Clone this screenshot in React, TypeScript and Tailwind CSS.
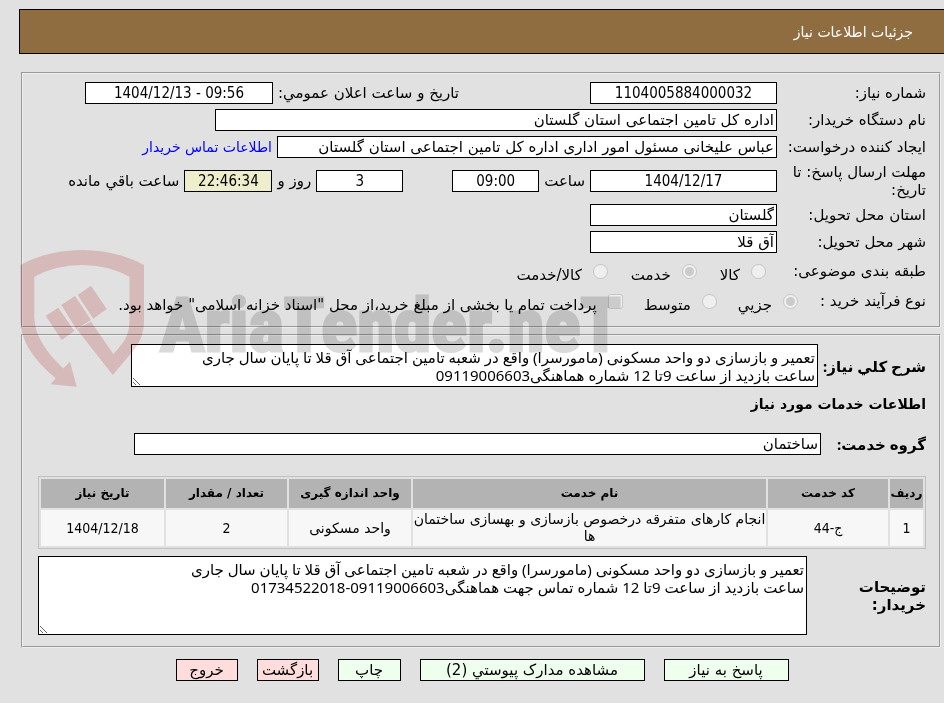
import type { ReactNode } from 'react';

interface FieldRowProps {
  label: string;
  htmlFor: string;
  children: ReactNode;
}

interface TextFieldProps {
  id: string;
  value: string;
  className: string;
}

interface ChoiceProps {
  type: 'radio' | 'checkbox';
  name: string;
  label: string;
  checked?: boolean;
}

const services = [
  {
    row: '1',
    code: 'ج-44',
    name: 'انجام کارهای متفرقه درخصوص بازسازی و بهسازی ساختمان ها',
    unit: 'واحد مسکونی',
    count: '2',
    date: '1404/12/18'
  }
];

const needSummary =
  'تعمیر و بازسازی دو واحد مسکونی (مامورسرا) واقع در شعبه تامین اجتماعی آق قلا تا پایان سال جاری\nساعت بازدید از ساعت 9تا 12 شماره هماهنگی09119006603';

const buyerNotes =
  'تعمیر و بازسازی دو واحد مسکونی (مامورسرا) واقع در شعبه تامین اجتماعی آق قلا تا پایان سال جاری\nساعت بازدید از ساعت 9تا 12 شماره تماس جهت هماهنگی09119006603-01734522018';

const actions = [
  { label: 'پاسخ به نیاز', style: 'w-[125px] bg-[#eeffee]' },
  { label: 'مشاهده مدارک پیوستي (2)', style: 'w-[225px] bg-[#eeffee]' },
  { label: 'چاپ', style: 'w-[63px] bg-[#eeffee]' },
  { label: 'بازگشت', style: 'w-[62px] bg-[#ffdddd]' },
  { label: 'خروج', style: 'w-[62px] bg-[#ffdddd]' }
];

export default function App() {
  return (
    <div
      dir="rtl"
      className='min-h-screen bg-[#e1e1e1] pt-[9px] text-[15px] leading-[18px] text-black font-["DejaVu_Sans",sans-serif]'
    >
      {/* Header */}
      <header className="me-[19px] flex h-[45px] items-center border-y border-e border-black bg-[#906d41] ps-[31px] text-white">
        <h1 className="text-[14px]">جزئیات اطلاعات نیاز</h1>
      </header>

      <main className="relative ms-[3px] me-[21px] mt-[18px]">
        {/* General info */}
        <section className="border-2 border-[#eeeeee] px-[13px] pt-[5px] pb-[10px] [border-style:groove]">
          <FieldRow label="شماره نیاز:" htmlFor="need-number">
            <NumberField id="need-number" value="1104005884000032" className="w-[187px] bg-white" />
            <label htmlFor="announce" className="ms-[126px] whitespace-nowrap">تاریخ و ساعت اعلان عمومي:</label>
            <NumberField id="announce" value="1404/12/13 - 09:56" className="w-[188px] bg-white" />
          </FieldRow>
          <FieldRow label="نام دستگاه خریدار:" htmlFor="buyer">
            <TextField id="buyer" value="اداره کل تامین اجتماعی استان گلستان" className="w-[562px]" />
          </FieldRow>
          <FieldRow label="ایجاد کننده درخواست:" htmlFor="creator">
            <TextField
              id="creator"
              value="عباس علیخانی مسئول امور اداری اداره کل تامین اجتماعی استان گلستان"
              className="w-[500px]"
            />
            <a href="#contact" className="text-[14px] whitespace-nowrap text-[#0000ff]">اطلاعات تماس خریدار</a>
          </FieldRow>

          <div className="flex h-[41px] items-center">
            <label htmlFor="deadline" className="w-[149px] shrink-0">
              مهلت ارسال پاسخ: تا تاریخ:
            </label>
            <div className="flex min-w-0 flex-1 items-center gap-[5px] whitespace-nowrap">
              <NumberField id="deadline" value="1404/12/17" className="w-[187px] bg-white" />
              <label htmlFor="deadline-hour">ساعت</label>
              <NumberField id="deadline-hour" value="09:00" className="w-[87px] bg-white" />
              <NumberField id="days" value="3" className="mr-[44px] w-[87px] bg-white" />
              <label htmlFor="days">روز و</label>
              <NumberField id="remaining" value="22:46:34" className="w-[88px] bg-[#eeeecc]" />
              <label htmlFor="remaining">ساعت باقي مانده</label>
            </div>
          </div>

          <FieldRow label="استان محل تحویل:" htmlFor="province">
            <TextField id="province" value="گلستان" className="w-[187px]" />
          </FieldRow>
          <FieldRow label="شهر محل تحویل:" htmlFor="city">
            <TextField id="city" value="آق قلا" className="w-[187px]" />
          </FieldRow>

          <div className="flex h-[31px] items-center">
            <span className="w-[149px] shrink-0">طبقه بندی موضوعی:</span>
            <div className="flex items-center gap-[23px] ps-[11px] pt-[6px]">
              <Choice type="radio" name="category" label="کالا" />
              <Choice type="radio" name="category" label="خدمت" checked />
              <Choice type="radio" name="category" label="کالا/خدمت" />
            </div>
          </div>
          <div className="flex h-[30px] items-center">
            <span className="w-[128px] shrink-0">نوع فرآیند خرید :</span>
            <div className="flex items-center gap-[21px] pt-[6px] whitespace-nowrap">
              <Choice type="radio" name="process" label="جزیي" checked />
              <Choice type="radio" name="process" label="متوسط" />
              <Choice
                type="checkbox"
                name="treasury"
                label={'پرداخت تمام یا بخشی از مبلغ خرید،از محل "اسناد خزانه اسلامی" خواهد بود.'}
              />
            </div>
          </div>
        </section>

        {/* Need details */}
        <section className="mt-[6px] border-2 border-[#eeeeee] ps-[13px] pe-[15px] pt-[8px] pb-[11px] [border-style:groove]">
          <div className="flex items-center gap-[5px]">
            <label
              htmlFor="summary"
              className='w-[103px] shrink-0 font-bold whitespace-nowrap font-["Noto_Sans","DejaVu_Sans",sans-serif]'
            >
              شرح کلي نیاز:
            </label>
            <TextBox id="summary" value={needSummary} className="h-[43px] w-[687px]" />
          </div>

          <h2 className="mt-[8px] text-[14px] leading-[18px] font-bold">اطلاعات خدمات مورد نیاز</h2>

          <div className="mt-[20px] flex items-center">
            <label
              htmlFor="group"
              className='w-[105px] shrink-0 font-bold font-["Noto_Sans","DejaVu_Sans",sans-serif]'
            >
              گروه خدمت:
            </label>
            <TextField id="group" value="ساختمان" className="w-[687px]" />
          </div>

          <table className="mt-[21px] w-full table-fixed border-separate border-spacing-[2px] border border-[#c0c0c0] text-center text-[14px] leading-[17px]">
            <colgroup>
              <col className="w-[33px]" />
              <col className="w-[120px]" />
              <col />
              <col className="w-[122px]" />
              <col className="w-[121px]" />
              <col className="w-[123px]" />
            </colgroup>
            <thead>
              <tr className="h-[29px] bg-[#b3b3b3] text-[12px]">
                <th className="whitespace-nowrap">ردیف</th>
                <th>کد خدمت</th>
                <th>نام خدمت</th>
                <th>واحد اندازه گیری</th>
                <th>تعداد / مقدار</th>
                <th>تاریخ نیاز</th>
              </tr>
            </thead>
            <tbody>
              {services.map(service => (
                <tr key={service.row} className="h-[36px] bg-[#f7f7f7]">
                  <td className='font-["DejaVu_Sans_Condensed",sans-serif]'>{service.row}</td>
                  <td className='font-["DejaVu_Sans_Condensed",sans-serif]'>{service.code}</td>
                  <td>{service.name}</td>
                  <td>{service.unit}</td>
                  <td className='font-["DejaVu_Sans_Condensed",sans-serif]'>{service.count}</td>
                  <td className='font-["DejaVu_Sans_Condensed",sans-serif]'>{service.date}</td>
                </tr>
              ))}
            </tbody>
          </table>

          <div className="mt-[7px] flex items-center">
            <label htmlFor="notes" className="w-[119px] shrink-0 font-bold">
              توضیحات<br />خریدار:
            </label>
            <TextBox id="notes" value={buyerNotes} className="h-[79px] flex-1" />
          </div>
        </section>

        <Watermark />
      </main>

      {/* Actions */}
      <div className="me-[20px] mt-[11px] flex justify-center gap-[19px] pb-[21px]">
        {actions.map(action => (
          <button
            key={action.label}
            type="button"
            className={`h-[22px] border border-black whitespace-nowrap ${action.style}`}
          >
            {action.label}
          </button>
        ))}
      </div>
    </div>
  );
}

function FieldRow({ label, htmlFor, children }: FieldRowProps) {
  return (
    <div className="flex h-[27px] items-center">
      <label htmlFor={htmlFor} className="w-[149px] shrink-0 whitespace-nowrap">{label}</label>
      <div className="flex min-w-0 flex-1 items-center gap-[5px]">{children}</div>
    </div>
  );
}

function TextField({ id, value, className }: TextFieldProps) {
  return (
    <input
      id={id}
      type="text"
      readOnly
      value={value}
      className={`h-[22px] min-w-0 border border-black bg-white px-[2px] ${className}`}
    />
  );
}

function NumberField({ id, value, className }: TextFieldProps) {
  return (
    <input
      id={id}
      type="text"
      dir="ltr"
      readOnly
      value={value}
      className={`h-[22px] min-w-0 border border-black text-center font-["DejaVu_Sans_Condensed",sans-serif] ${className}`}
    />
  );
}

function TextBox({ id, value, className }: TextFieldProps) {
  return (
    <textarea
      id={id}
      readOnly
      defaultValue={value}
      className={`min-w-0 overflow-hidden border border-black bg-white px-[2px] pt-[3px] font-["Noto_Sans","DejaVu_Sans",sans-serif] ${className}`}
    />
  );
}

function Choice({ type, name, label, checked = false }: ChoiceProps) {
  return (
    <label className="flex items-start gap-[11px]">
      <input type={type} name={name} disabled defaultChecked={checked} className="size-[15px]" />
      <span className="pt-[2px]">{label}</span>
    </label>
  );
}

function Watermark() {
  return (
    <svg
      aria-hidden="true"
      viewBox="0 0 610 150"
      className="pointer-events-none absolute top-[178px] left-[-1px] h-[150px] w-[610px] mix-blend-multiply"
    >
      <g fill="#f3d2d2">
        {/* shield, arrow and gavel handle */}
        <path d="M0.5 15Q28 0 62 0T124 15V70C124 84 120 92 113 101L92.7 125L56.7 79L71 71.7L93.3 104C105 92 109.5 84 109.5 70V26.7Q88 15 62 15T14.3 26.7V68C15 86 26 102 43.3 118.5L50 111.7L56.7 136.7L30.7 134.3L35.7 128.3C14 110 1 92 0.5 70Z" />
        {/* gavel head */}
        <path d="M25.7 65.7L38.3 57.7L54.3 81L41.7 90Z" />
        <path d="M41.3 55L55 46L71 70L56.3 79Z" />
        <path d="M57.7 45L71 35.7L86.7 59L73.3 68.7Z" />
      </g>
      <text
        x="140"
        y="101"
        direction="ltr"
        fill="#dadada"
        stroke="#dadada"
        strokeWidth="3"
        className='text-[75px] font-bold font-["Roboto_Condensed","Roboto",sans-serif]'
      >
        AriaTender.neT
      </text>
    </svg>
  );
}
